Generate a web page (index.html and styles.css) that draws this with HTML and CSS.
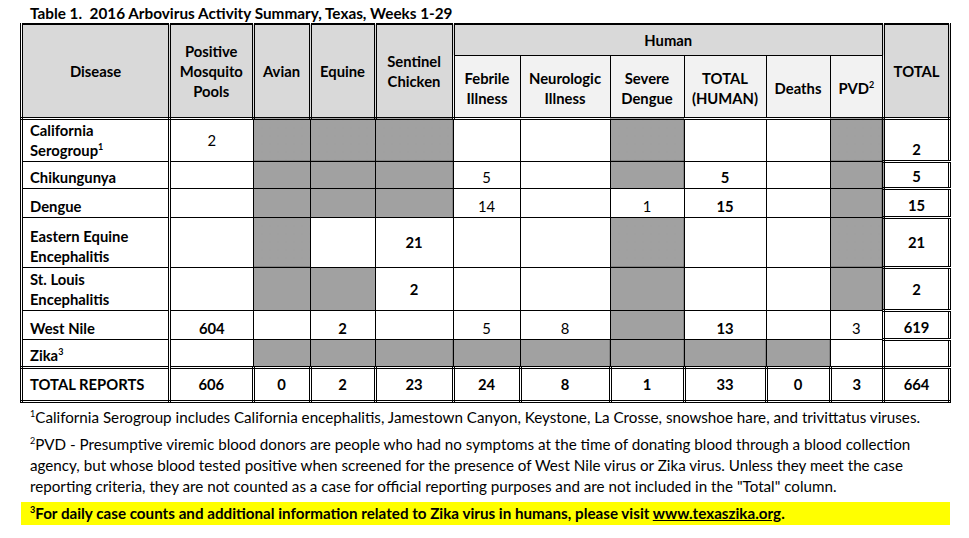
FILE: index.html
```html
<!DOCTYPE html>
<html>
<head>
<meta charset="utf-8">
<link rel="stylesheet" href="styles.css">
</head>
<body>
<div class="page">
  <div class="title">Table 1.&nbsp; 2016 Arbovirus Activity Summary, Texas, Weeks 1-29</div>
  <table class="summary">
    <colgroup>
      <col style="width:148px"><col style="width:83.5px"><col style="width:57px"><col style="width:65px"><col style="width:78px">
      <col style="width:67px"><col style="width:90px"><col style="width:74px"><col style="width:82px"><col style="width:64px"><col style="width:53.5px">
      <col style="width:66px">
    </colgroup>
    <thead>
      <tr class="h1">
        <th class="main" rowspan="2">Disease</th>
        <th class="main" rowspan="2">Positive<br>Mosquito<br>Pools</th>
        <th class="main" rowspan="2">Avian</th>
        <th class="main" rowspan="2">Equine</th>
        <th class="main" rowspan="2">Sentinel<br>Chicken</th>
        <th class="main human" colspan="6">Human</th>
        <th class="main" rowspan="2">TOTAL</th>
      </tr>
      <tr class="h2">
        <th class="sub">Febrile<br>Illness</th>
        <th class="sub">Neurologic<br>Illness</th>
        <th class="sub">Severe<br>Dengue</th>
        <th class="sub">TOTAL<br>(HUMAN)</th>
        <th class="sub">Deaths</th>
        <th class="sub last">PVD<sup>2</sup></th>
      </tr>
    </thead>
    <tbody>
      <tr class="r-cal">
        <td class="name">California<br>Serogroup<sup>1</sup></td>
        <td class="mid">2</td>
        <td class="hatch"></td><td class="hatch"></td><td class="hatch"></td>
        <td></td><td></td><td class="hatch"></td><td></td><td></td><td class="hatch"></td>
        <td class="tot b">2</td>
      </tr>
      <tr class="r-chik">
        <td class="name">Chikungunya</td>
        <td></td>
        <td class="hatch"></td><td class="hatch"></td><td class="hatch"></td>
        <td>5</td><td></td><td class="hatch"></td><td class="b">5</td><td></td><td class="hatch"></td>
        <td class="tot b">5</td>
      </tr>
      <tr class="r-den">
        <td class="name">Dengue</td>
        <td></td>
        <td class="hatch"></td><td class="hatch"></td><td class="hatch"></td>
        <td>14</td><td></td><td>1</td><td class="b">15</td><td></td><td class="hatch"></td>
        <td class="tot b">15</td>
      </tr>
      <tr class="r-eee">
        <td class="name">Eastern Equine<br>Encephalitis</td>
        <td></td>
        <td class="hatch"></td><td></td><td class="b mid">21</td>
        <td></td><td></td><td class="hatch"></td><td></td><td></td><td class="hatch"></td>
        <td class="tot b mid">21</td>
      </tr>
      <tr class="r-stl">
        <td class="name">St. Louis<br>Encephalitis</td>
        <td></td>
        <td class="hatch"></td><td class="hatch"></td><td class="b mid">2</td>
        <td></td><td></td><td class="hatch"></td><td></td><td></td><td class="hatch"></td>
        <td class="tot b mid">2</td>
      </tr>
      <tr class="r-wn">
        <td class="name">West Nile</td>
        <td class="b">604</td>
        <td></td><td class="b">2</td><td></td>
        <td>5</td><td>8</td><td class="hatch"></td><td class="b">13</td><td></td><td>3</td>
        <td class="tot b">619</td>
      </tr>
      <tr class="r-zika">
        <td class="name">Zika<sup>3</sup></td>
        <td></td>
        <td class="hatch"></td><td class="hatch"></td><td class="hatch"></td>
        <td class="hatch"></td><td class="hatch"></td><td class="hatch"></td><td class="hatch"></td><td class="hatch"></td><td></td>
        <td class="tot"></td>
      </tr>
      <tr class="r-total">
        <td class="name">TOTAL REPORTS</td>
        <td>606</td><td>0</td><td>2</td><td>23</td>
        <td>24</td><td>8</td><td>1</td><td>33</td><td>0</td><td>3</td>
        <td>664</td>
      </tr>
    </tbody>
  </table>
  <div class="notes">
    <p class="note"><sup>1</sup>California Serogroup includes California encephalitis, Jamestown Canyon, Keystone, La Crosse, snowshoe hare, and trivittatus viruses.</p>
    <p class="note"><sup>2</sup>PVD - Presumptive viremic blood donors are people who had no symptoms at the time of donating blood through a blood collection<br>agency, but whose blood tested positive when screened for the presence of West Nile virus or Zika virus. Unless they meet the case<br>reporting criteria, they are not counted as a case for official reporting purposes and are not included in the "Total" column.</p>
    <p class="note highlight"><sup>3</sup>For daily case counts and additional information related to Zika virus in humans, please visit <a class="link" href="#">www.texaszika.org</a>.</p>
  </div>
</div>
</body>
</html>
```
FILE: styles.css
```css
html, body {
  margin: 0;
  padding: 0;
  background: #ffffff;
}

body {
  font-family: Lato, "Open Sans", "Liberation Sans", sans-serif;
  color: #000000;
}

.page {
  width: 931px;
  padding: 4px 0 0 20px;
}

.title {
  font-weight: 700;
  font-size: 15.3px;
  line-height: 19px;
  height: 19px;
  padding-left: 10px;
}

.summary {
  border-collapse: collapse;
  table-layout: fixed;
  width: 931px;
  font-size: 14.8px;
  line-height: 20px;
  border-top: 2px solid #000;
  border-left: 3px double #000;
  border-right: 3px double #000;
  border-bottom: 3px double #000;
}

.summary th,
.summary td {
  border: 1px solid #000;
  padding: 0 4px;
  text-align: center;
}

.summary sup {
  font-size: 9px;
  line-height: 0;
  vertical-align: 6px;
}

.summary th {
  font-weight: 700;
  vertical-align: middle;
}

.summary th.main {
  background: #d9d9d9;
  border-left: 3px double #000;
  border-right: 3px double #000;
}

.summary th.sub {
  background: #f2f2f2;
  padding-top: 4px;
}

.summary th.sub.last {
  border-right: 3px double #000;
}

.summary thead tr.h2 th,
.summary thead th[rowspan] {
  border-bottom: 3px double #000;
}

.h1 { height: 31px; }
.h2 { height: 63px; }

.summary td {
  vertical-align: bottom;
  padding-bottom: 1px;
}

.summary td.mid {
  vertical-align: middle;
  padding-bottom: 0;
}

.summary td.name {
  text-align: left;
  font-weight: 700;
  padding-left: 7px;
  border-right: 3px double #000;
}

.summary td.b { font-weight: 700; }

.summary td.tot {
  border-left: 3px double #000;
  border-top: 3px double #000;
  border-bottom: 3px double #000;
}

.summary td.hatch {
  background-color: #e4e4e4;
  background-image:
    repeating-linear-gradient(90deg, rgba(50, 50, 50, 0.42) 0 1px, transparent 1px 2px),
    repeating-linear-gradient(0deg, rgba(50, 50, 50, 0.42) 0 1px, transparent 1px 2px);
}

.r-cal { height: 42px; }
.r-chik { height: 27px; }
.r-den { height: 29px; }
.r-eee { height: 50px; }
.r-stl { height: 43px; }
.r-wn { height: 29px; }
.r-zika { height: 28px; }
.r-total { height: 34px; }

.summary tr.r-total td {
  font-weight: 700;
  border: 3px double #000;
  vertical-align: middle;
  padding-bottom: 0;
}

.notes {
  padding-top: 4px;
  font-size: 15.2px;
  line-height: 21px;
}

.note {
  margin: 0 0 6px 0;
  padding-left: 10px;
  white-space: nowrap;
}

.note sup {
  font-size: 9px;
  line-height: 0;
  vertical-align: 6px;
}

.note.highlight {
  background: #ffff00;
  font-weight: 700;
  margin: -1px 0 0 1px;
  width: 920px;
  padding-left: 9px;
  line-height: 23px;
}

.link {
  color: #000;
  text-decoration: underline;
}
```
